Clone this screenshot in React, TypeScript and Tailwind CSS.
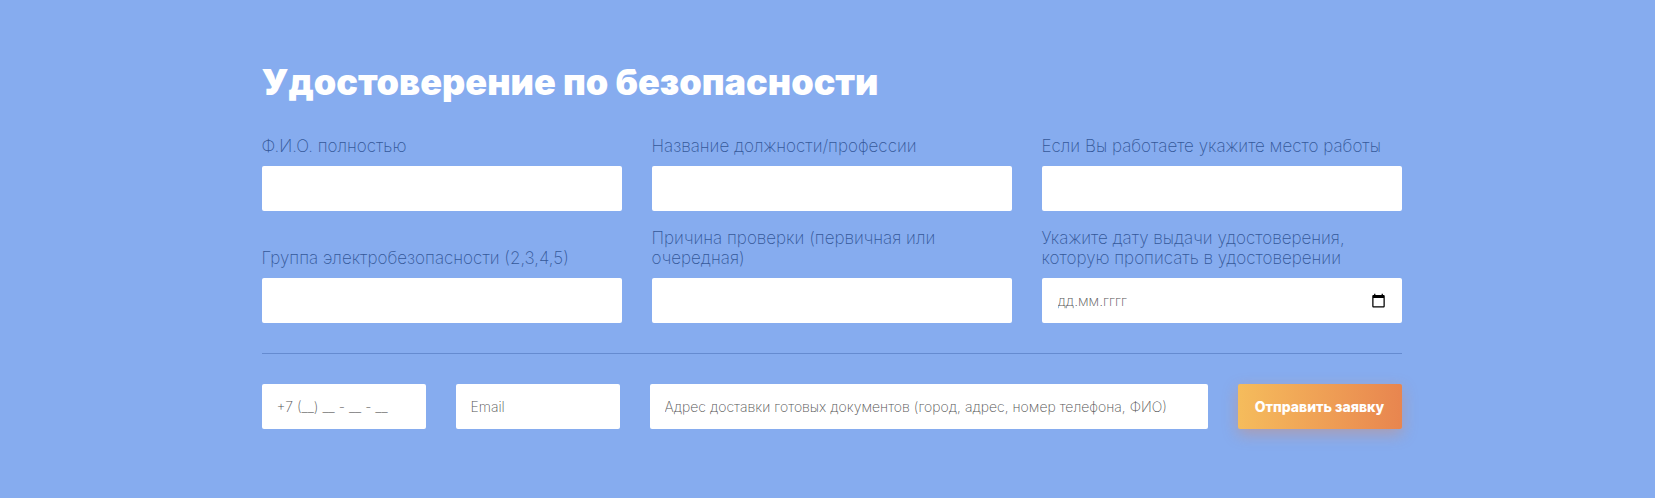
import { useId } from 'react';

const FIELD =
  'h-[45px] w-full min-w-0 rounded-xs bg-white px-[15px] text-sm font-extralight text-gray-700 outline-none placeholder:text-[#555555] focus:ring-2 focus:ring-[#4f78c4]';

const LABEL = 'text-[17px]/5 font-extralight text-[#35599a]';

function Field({ label }: { label: string }) {
  const id = useId();
  return (
    <div className="flex flex-col justify-end gap-[10px]">
      <label htmlFor={id} className={LABEL}>
        {label}
      </label>
      <input id={id} type="text" className={FIELD} />
    </div>
  );
}

function DateField({ label }: { label: string }) {
  const id = useId();
  return (
    <div className="flex flex-col justify-end gap-[10px]">
      <label htmlFor={id} className={LABEL}>
        {label}
      </label>
      <div className="flex h-[45px] items-center rounded-xs bg-white pr-4">
        <input
          id={id}
          type="text"
          inputMode="numeric"
          placeholder="дд.мм.гггг"
          className="h-full min-w-0 flex-1 bg-transparent px-4 text-sm font-extralight text-gray-700 outline-none placeholder:text-[#555555]"
        />
        <button type="button" aria-label="Открыть календарь" className="text-black">
          <svg viewBox="0 0 24 24" className="size-[15px]" fill="currentColor" aria-hidden="true">
            <path d="M20 3h-1V1h-2v2H7V1H5v2H4c-1.1 0-2 .9-2 2v16c0 1.1.9 2 2 2h16c1.1 0 2-.9 2-2V5c0-1.1-.9-2-2-2zm0 18H4V8h16v13z" />
          </svg>
        </button>
      </div>
    </div>
  );
}

export default function App() {
  return (
    <section className="bg-[#86acef] pt-[58px] pr-4 pb-[69px] pl-6 font-['Inter','Noto_Sans',sans-serif]">
      <form className="mx-auto max-w-[1140px]" onSubmit={(e) => e.preventDefault()}>
        <h2 className="mb-[30px] text-4xl/[48px] font-black text-white">Удостоверение по безопасности</h2>
        <div className="grid grid-cols-1 gap-x-[30px] gap-y-[17px] md:grid-cols-3">
          <Field label="Ф.И.О. полностью" />
          <Field label="Название должности/профессии" />
          <Field label="Если Вы работаете укажите место работы" />
          <Field label="Группа электробезопасности (2,3,4,5)" />
          <Field label="Причина проверки (первичная или очередная)" />
          <DateField label="Укажите дату выдачи удостоверения, которую прописать в удостоверении" />
        </div>
        <hr className="my-[30px] border-[#658bd0]" />
        <div className="grid grid-cols-1 gap-[30px] md:grid-cols-[164px_164px_1fr_164px]">
          <input type="tel" aria-label="Телефон" placeholder="+7 (__) __ - __ - __" className={FIELD} />
          <input type="email" aria-label="Email" placeholder="Email" className={FIELD} />
          <input
            type="text"
            aria-label="Адрес доставки"
            placeholder="Адрес доставки готовых документов (город, адрес, номер телефона, ФИО)"
            className={FIELD}
          />
          <button
            type="submit"
            className="h-[45px] rounded-xs bg-linear-to-r from-[#f5bc5c] to-[#e8854f] text-sm font-extrabold whitespace-nowrap text-white shadow-[0_5px_15px_rgba(232,133,79,0.4)]"
          >
            Отправить заявку
          </button>
        </div>
      </form>
    </section>
  );
}
